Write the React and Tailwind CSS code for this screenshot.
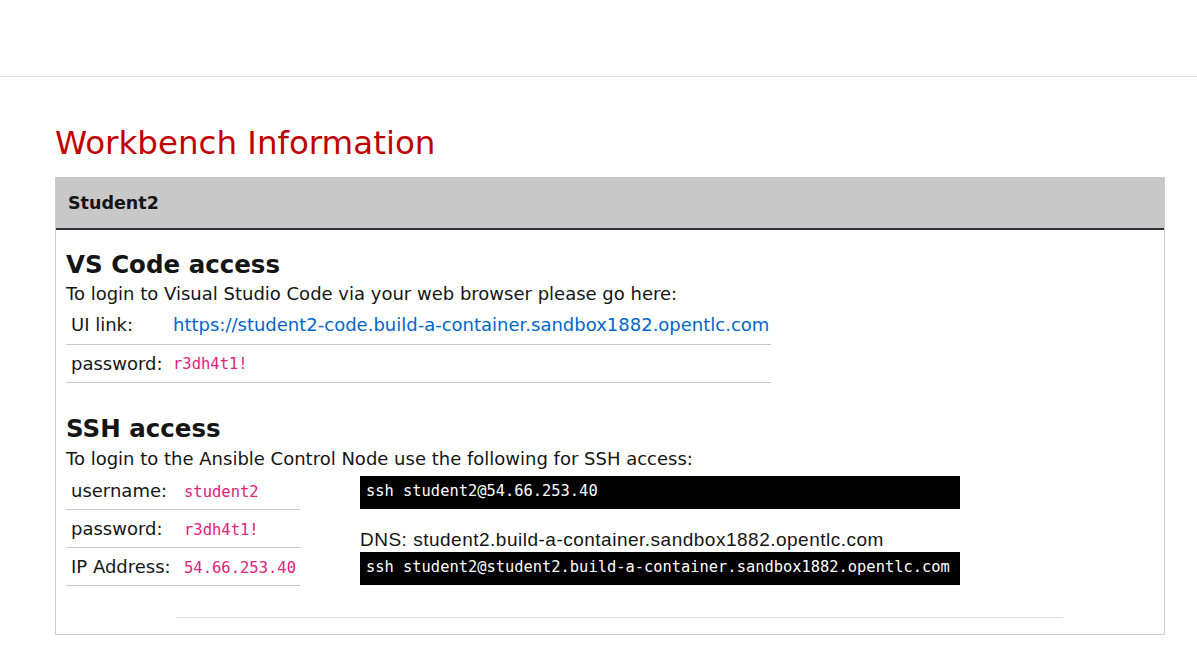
const mono = { fontFamily: '"DejaVu Sans Mono", Menlo, monospace' };

function Val({ children }) {
  return (
    <code className="text-[15.5px] text-[#e0227a]" style={mono}>
      {children}
    </code>
  );
}

export default function App() {
  return (
    <div className="min-h-[661px] bg-white text-[#151515]" style={{ fontFamily: '"DejaVu Sans", Verdana, sans-serif' }}>
      <div className="h-[77px] border-b border-[#e2e2e2]" />
      <div className="ml-[55px] w-[1110px]">
        <h1 className="mt-[46px] text-[32.5px] leading-[40px] text-[#c00000]">Workbench Information</h1>
        <div className="mt-[14px] border border-[#cccccc]">
          <div className="flex h-[52px] items-center border-b-2 border-[#34343f] bg-[#c8c8c8] px-3 text-[17.5px] font-bold">
            Student2
          </div>
          <div className="px-[10px] pt-[19px] pb-[16px]">
            <h2 className="text-[24.5px] font-bold leading-[32px]">VS Code access</h2>
            <p className="text-[18px] leading-[25px]">To login to Visual Studio Code via your web browser please go here:</p>
            <table className="w-[705px] text-[18px]">
              <tbody>
                <tr className="h-[38px] border-b border-[#c8c8c8]">
                  <td className="w-[107px] px-[5px]">UI link:</td>
                  <td>
                    <a className="text-[#0066cc]" href="#">https://student2-code.build-a-container.sandbox1882.opentlc.com</a>
                  </td>
                </tr>
                <tr className="h-[38px] border-b border-[#c8c8c8]">
                  <td className="px-[5px]">password:</td>
                  <td>
                    <Val>r3dh4t1!</Val>
                  </td>
                </tr>
              </tbody>
            </table>

            <h2 className="mt-[30px] text-[24.5px] font-bold leading-[32px]">SSH access</h2>
            <p className="text-[18px] leading-[27px]">To login to the Ansible Control Node use the following for SSH access:</p>
            <div className="flex items-start gap-[60px]">
              <table className="w-[234px] shrink-0 text-[18px]">
                <tbody>
                  {[
                    ['username:', 'student2'],
                    ['password:', 'r3dh4t1!'],
                    ['IP Address:', '54.66.253.40'],
                  ].map(([k, v]) => (
                    <tr key={k} className="h-[38px] border-b border-[#c8c8c8]">
                      <td className="w-[118px] px-[5px] whitespace-nowrap">{k}</td>
                      <td>
                        <Val>{v}</Val>
                      </td>
                    </tr>
                  ))}
                </tbody>
              </table>
              <div className="w-[600px] pt-[4px]">
                <pre className="flex h-[33px] items-center bg-black px-[6px] text-[15.4px] text-white" style={mono}>ssh student2@54.66.253.40</pre>
                <p className="mt-[18px] text-[19px] leading-[25px] tracking-[0.5px]" style={{ fontFamily: '"Liberation Sans", Arial, sans-serif' }}>
                  DNS: student2.build-a-container.sandbox1882.opentlc.com
                </p>
                <pre className="flex h-[33px] items-center bg-black px-[6px] text-[15.4px] text-white" style={mono}>ssh student2@student2.build-a-container.sandbox1882.opentlc.com</pre>
              </div>
            </div>
            <div className="mt-[31px] ml-[110px] w-[887px] border-t border-[#dddddd]" />
          </div>
        </div>
      </div>
    </div>
  );
}
